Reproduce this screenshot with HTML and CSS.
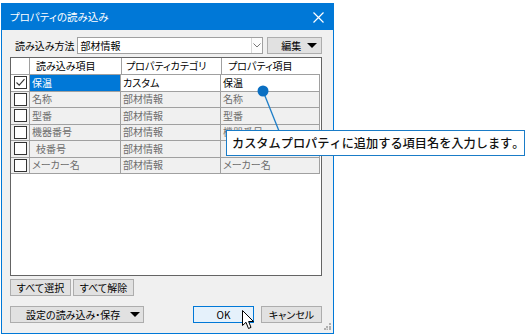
FILE: index.html
```html
<!DOCTYPE html>
<html lang="ja">
<head>
<meta charset="utf-8">
<link rel="stylesheet" href="styles.css">
</head>
<body>
<div class="dialog">
  <div class="titlebar">
    <span class="title">プロパティの読み込み</span>
    <svg class="close" width="11" height="11" viewBox="0 0 11 11"><path d="M0.5 0.5 L10.5 10.5 M10.5 0.5 L0.5 10.5" stroke="#fff" stroke-width="1.2"/></svg>
  </div>
  <div class="content">
    <div class="method-row">
      <span class="label">読み込み方法</span>
      <div class="select">
        <span class="select-text">部材情報</span>
        <span class="select-arrow"><svg width="8" height="5" viewBox="0 0 8 5"><path d="M0.5 0.5 L4 4 L7.5 0.5" fill="none" stroke="#777" stroke-width="1"/></svg></span>
      </div>
      <div class="btn edit-btn"><span>編集</span><span class="tri"></span></div>
    </div>
    <div class="grid">
      <div class="row head">
        <div class="c c0"></div>
        <div class="c c1">読み込み項目</div>
        <div class="c c2">プロパティカテゴリ</div>
        <div class="c c3">プロパティ項目</div>
      </div>
      <div class="row first">
        <div class="c c0"><span class="cb checked"><svg width="11" height="11" viewBox="0 0 11 11"><path d="M1.5 5.5 L4.2 8.2 L9.5 2.2" fill="none" stroke="#333" stroke-width="1.1"/></svg></span></div>
        <div class="c c1 sel">保温</div>
        <div class="c c2">カスタム</div>
        <div class="c c3">保温</div>
      </div>
      <div class="row dim">
        <div class="c c0"><span class="cb"></span></div>
        <div class="c c1">名称</div>
        <div class="c c2">部材情報</div>
        <div class="c c3">名称</div>
      </div>
      <div class="row dim">
        <div class="c c0"><span class="cb"></span></div>
        <div class="c c1">型番</div>
        <div class="c c2">部材情報</div>
        <div class="c c3">型番</div>
      </div>
      <div class="row dim">
        <div class="c c0"><span class="cb"></span></div>
        <div class="c c1">機器番号</div>
        <div class="c c2">部材情報</div>
        <div class="c c3">機器番号</div>
      </div>
      <div class="row dim">
        <div class="c c0"><span class="cb"></span></div>
        <div class="c c1 indent">枝番号</div>
        <div class="c c2">部材情報</div>
        <div class="c c3"></div>
      </div>
      <div class="row dim">
        <div class="c c0"><span class="cb"></span></div>
        <div class="c c1">メーカー名</div>
        <div class="c c2">部材情報</div>
        <div class="c c3">メーカー名</div>
      </div>
    </div>
    <div class="sel-row">
      <div class="btn small">すべて選択</div>
      <div class="btn small">すべて解除</div>
    </div>
    <div class="bottom-row">
      <div class="btn settings"><span>設定の読み込み・保存</span><span class="tri"></span></div>
      <div class="spacer"></div>
      <div class="btn ok">OK</div>
      <div class="btn cancel">キャンセル</div>
    </div>
  </div>
  <svg class="grip" width="7" height="7" viewBox="0 0 7 7"><g fill="#b0b0b0"><rect x="5" y="0" width="2" height="2"/><rect x="2" y="3" width="2" height="2"/><rect x="5" y="3" width="2" height="2"/><rect x="0" y="5" width="2" height="2"/><rect x="2.5" y="5.5" width="1.5" height="1.5"/><rect x="5" y="5" width="2" height="2"/></g></svg>
</div>

<svg class="leader" width="526" height="336" viewBox="0 0 526 336">
  <line x1="263" y1="91" x2="279" y2="131" stroke="#1a7cc7" stroke-width="1.3"/>
  <circle cx="263" cy="91" r="5.5" fill="#0a6fc2"/>
</svg>
<div class="callout">カスタムプロパティに追加する項目名を入力します。</div>

<svg class="cursor" width="13" height="20" viewBox="0 0 13 20">
  <path d="M0.5 0.5 L0.5 15.5 L4 12.3 L6.5 18.5 L9 17.4 L6.6 11.5 L11.5 11.5 Z" fill="#fff" stroke="#000" stroke-width="1" stroke-linejoin="round"/>
</svg>
</body>
</html>
```

FILE: styles.css
```css
* { box-sizing: border-box; }
html, body {
  margin: 0;
  padding: 0;
  background: #ffffff;
  width: 526px;
  height: 336px;
  overflow: hidden;
  font-family: "Noto Sans CJK JP", "Noto Sans", sans-serif;
  font-size: 10px;
  font-feature-settings: "palt";
  color: #000;
}
.dialog {
  position: relative;
  margin: 3px 0 0 1px;
  width: 333px;
  height: 331px;
  border: 1px solid #0078d7;
  background: #f0f0f0;
  display: flex;
  flex-direction: column;
}
.titlebar {
  height: 26px;
  background: #0078d7;
  display: flex;
  align-items: center;
  justify-content: space-between;
  padding: 0 8px 0 8px;
  flex: none;
}
.title {
  color: #fff;
  font-size: 10.5px;
  line-height: 1;
}
.close { margin-right: 1px; }
.content {
  padding: 7px 11px 0 8px;
  display: flex;
  flex-direction: column;
}
.method-row {
  display: flex;
  align-items: center;
  height: 17px;
}
.label {
  margin-left: 5px;
  width: 62px;
  line-height: 1;
}
.select {
  width: 188px;
  height: 17px;
  border: 1px solid #a0a0a0;
  background: #fff;
  display: flex;
  align-items: center;
  margin-right: 4px;
}
.select-text {
  flex: 1;
  padding-left: 3px;
  line-height: 1;
}
.select-arrow {
  width: 11px;
  height: 15px;
  border-left: 1px solid #d8d8d8;
  display: flex;
  align-items: center;
  justify-content: center;
  background: #fcfcfc;
}
.btn {
  background: #e1e1e1;
  border: 1px solid #adadad;
  display: flex;
  align-items: center;
  justify-content: center;
  line-height: 1;
  height: 17px;
}
.edit-btn {
  width: 55px;
  justify-content: space-between;
  padding: 0 4px 0 13px;
}
.tri {
  width: 0;
  height: 0;
  border-left: 5px solid transparent;
  border-right: 5px solid transparent;
  border-top: 5px solid #000;
}
.grid {
  margin-top: 3px;
  width: 312px;
  height: 219px;
  border: 1px solid #646464;
  background: #fff;
  display: flex;
  flex-direction: column;
}
.row {
  display: flex;
  height: 16.5px;
  border-bottom: 1px solid #a0a0a0;
  width: 309px;
}
.row.head { height: 17px; }
.c {
  height: 100%;
  border-right: 1px solid #a0a0a0;
  display: flex;
  align-items: center;
  padding-left: 2px;
  line-height: 1;
  white-space: nowrap;
  overflow: hidden;
}
.c0 { width: 19px; justify-content: center; padding-left: 0; }
.c1 { width: 91px; }
.c2 { width: 100px; }
.c3 { width: 99px; }
.head .c { border-right: none; padding-left: 6px; }
.head .c2 { border-left: 1px solid #a0a0a0; }
.head .c3 { border-left: 1px solid #a0a0a0; }
.head .c0 { border-right: 1px solid #a0a0a0; }
.head .c1 { padding-left: 6px; }
.head .c2 { padding-left: 4px; }
.head .c3 { padding-left: 6px; }
.sel { background: #0078d7; color: #fff; }
.dim { background: #f0f0f0; color: #6d6d6d; }
.dim .c0 { background: #f0f0f0; }
.indent { padding-left: 6px; }
.cb {
  width: 13px;
  height: 13px;
  border: 1px solid #333;
  background: #fff;
  display: flex;
  align-items: center;
  justify-content: center;
}
.sel-row {
  margin-top: 3px;
  display: flex;
  gap: 2px;
}
.small { width: 61px; height: 17px; }
.bottom-row {
  margin-top: 10px;
  display: flex;
  align-items: center;
}
.settings {
  width: 134px;
  justify-content: space-between;
  padding: 0 3px 0 15px;
}
.spacer { flex: 1; }
.ok {
  width: 61px;
  background: #e5f1fb;
  border-color: #0078d7;
  margin-right: 7px;
}
.cancel { width: 61px; }
.grip {
  position: absolute;
  right: 2px;
  bottom: 3px;
}
.leader {
  position: absolute;
  left: 0;
  top: 0;
}
.callout {
  position: absolute;
  left: 226px;
  top: 130px;
  width: 299px;
  height: 26px;
  border: 1.5px solid #1a7cc7;
  background: #fff;
  font-size: 12.2px;
  font-feature-settings: normal;
  font-kerning: none;
  font-weight: 500;
  padding-left: 5px;
  display: flex;
  align-items: center;
  line-height: 1;
  color: #111;
  white-space: nowrap;
}
.cursor {
  position: absolute;
  left: 242px;
  top: 310px;
}
```
